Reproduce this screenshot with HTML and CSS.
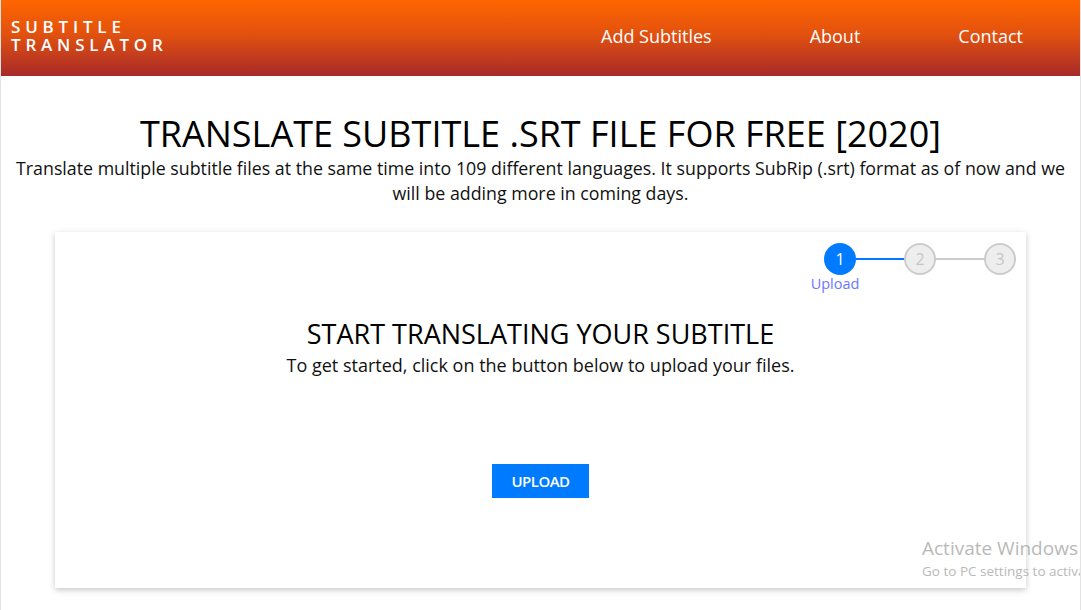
FILE: index.html
```html
<!DOCTYPE html>
<html>
<head>
<meta charset="utf-8">
<title>Subtitle Translator</title>
<link rel="stylesheet" href="styles.css">
</head>
<body>
<div class="page">
  <header class="topbar">
    <div class="logo"><span class="logo-line">SUBTITLE</span><span class="logo-line">TRANSLATOR</span></div>
    <nav class="nav">
      <a class="nav-link nav-add">Add Subtitles</a>
      <a class="nav-link nav-about">About</a>
      <a class="nav-link nav-contact">Contact</a>
    </nav>
  </header>
  <section class="intro">
    <h1 class="title">TRANSLATE SUBTITLE .SRT FILE FOR FREE [2020]</h1>
    <p class="lead">Translate multiple subtitle files at the same time into 109 different languages. It supports SubRip (.srt) format as of now and we will be adding more in coming days.</p>
  </section>
  <main class="card">
    <div class="stepper">
      <div class="step active"><span class="dot">1</span><span class="label">Upload</span></div>
      <div class="bar bar-active"></div>
      <div class="step"><span class="dot">2</span></div>
      <div class="bar"></div>
      <div class="step"><span class="dot">3</span></div>
    </div>
    <h2 class="card-title">START TRANSLATING YOUR SUBTITLE</h2>
    <p class="card-text">To get started, click on the button below to upload your files.</p>
    <button class="upload">UPLOAD</button>
  </main>
  <div class="watermark">
    <div class="wm-title">Activate Windows</div>
    <div class="wm-sub">Go to PC settings to activate Windows.</div>
  </div>
</div>
</body>
</html>
```
FILE: styles.css
```css
html, body {
  margin: 0;
  padding: 0;
  background: #fff;
  overflow: hidden;
}
body {
  font-family: "Open Sans", "Liberation Sans", sans-serif;
  color: #111;
}
.page {
  position: relative;
  width: 1079px;
  height: 610px;
  border-left: 1px solid #e3e3e3;
  border-right: 1px solid #e3e3e3;
  overflow: hidden;
}
.topbar {
  height: 76px;
  background: linear-gradient(to bottom, #ff6600 0%, #e2510f 45%, #a72a2a 100%);
  display: flex;
  align-items: center;
  justify-content: space-between;
  color: #fff;
}
.logo {
  padding-left: 10px;
  display: flex;
  flex-direction: column;
  margin-top: -4px;
}
.logo-line {
  display: block;
  font-weight: 600;
  font-size: 17px;
  line-height: 18px;
  height: 18px;
  letter-spacing: 4.8px;
}
.nav {
  display: flex;
  align-items: center;
  padding-right: 57px;
  margin-top: -4px;
}
.nav-link {
  font-size: 18px;
  color: #fff;
}
.nav-add { margin-right: 98px; }
.nav-about { margin-right: 98px; }
.intro {
  text-align: center;
  padding: 38px 8px 0;
}
.title {
  margin: 0;
  font-size: 36px;
  font-weight: 500;
  line-height: 40px;
  color: #000;
}
.lead {
  margin: 2px 0 0;
  font-size: 17.8px;
  line-height: 25px;
  color: #111;
}
.card {
  margin: 26px 0 0 54px;
  width: 971px;
  height: 356px;
  box-sizing: border-box;
  background: #fff;
  box-shadow: 0 2px 6px rgba(0,0,0,0.22);
  text-align: center;
  padding-top: 11px;
}
.stepper {
  display: flex;
  justify-content: flex-end;
  align-items: flex-start;
  padding-right: 10px;
  height: 62px;
}
.step {
  width: 32px;
  display: flex;
  flex-direction: column;
  align-items: center;
}
.dot {
  width: 32px;
  height: 32px;
  box-sizing: border-box;
  border-radius: 50%;
  background: #eeeeee;
  border: 2px solid #cccccc;
  color: #c6c6c6;
  font-size: 16px;
  line-height: 28px;
  text-align: center;
}
.step.active .dot {
  background: #007bff;
  border-color: #007bff;
  color: #fff;
}
.label {
  margin-top: -1px;
  margin-right: 10px;
  font-size: 14.5px;
  line-height: 20px;
  color: #6b77ff;
  white-space: nowrap;
}
.bar {
  width: 48px;
  height: 2px;
  margin-top: 15px;
  background: #cccccc;
}
.bar-active { background: #007bff; }
.card-title {
  margin: 13px 0 0;
  font-size: 27px;
  font-weight: 500;
  line-height: 32px;
  color: #000;
}
.card-text {
  margin: 4px 0 0;
  font-size: 18px;
  line-height: 22px;
  color: #111;
}
.upload {
  margin-top: 88px;
  width: 97px;
  height: 34px;
  border: 0;
  background: #007bff;
  color: #fff;
  font-family: "Open Sans", sans-serif;
  font-weight: 600;
  font-size: 15px;
  letter-spacing: -0.5px;
  cursor: pointer;
}
.watermark {
  position: absolute;
  left: 921px;
  top: 536px;
  color: #b9b9b9;
  white-space: nowrap;
}
.wm-title {
  font-size: 19px;
  line-height: 25px;
}
.wm-sub {
  font-size: 13.5px;
  line-height: 20px;
}
```
